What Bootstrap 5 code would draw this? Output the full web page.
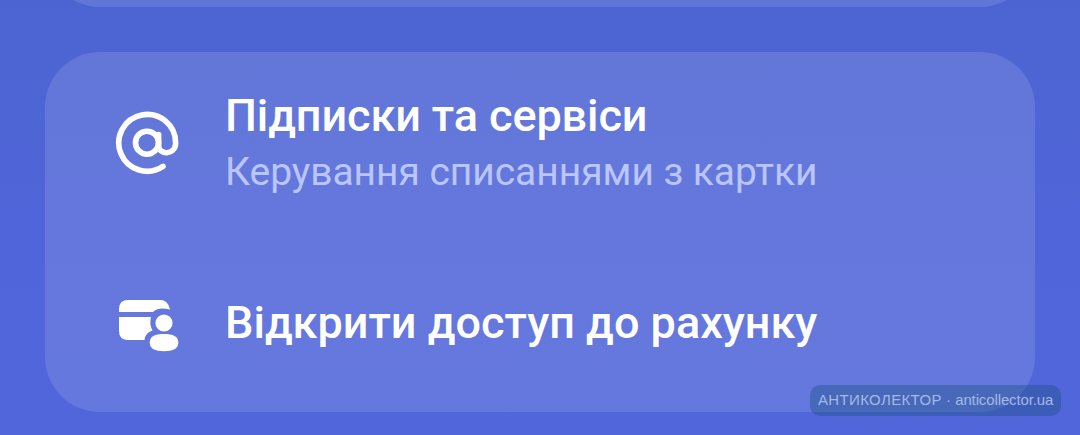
<!DOCTYPE html>
<html lang="uk">
<head>
  <meta charset="UTF-8">
  <meta name="viewport" content="width=device-width, initial-scale=1.0">
  <title>Підписки та сервіси</title>
  <link href="https://cdn.jsdelivr.net/npm/bootstrap@5.3.0/dist/css/bootstrap.min.css" rel="stylesheet">
  <style>
    body {
      height: 435px;
      background: linear-gradient(#4c64d1, #4e65d5 25%, #5065d9 50%, #5066da);
      font-family: Roboto, sans-serif;
    }

    .panel {
      margin: 0 45px;
      background: rgba(255, 255, 255, 0.12);
      border-radius: 55px;
    }

    /* Попередня панель, видно лише нижній край */
    .panel-prev {
      height: 120px;
      margin-top: -113px;
    }

    .panel-main {
      height: 360px;
      margin-top: 45px;
      padding: 37px 70px 0;
    }

    .menu-icon {
      width: 64px;
      height: 64px;
      margin-right: 46px;
    }

    .item-first {
      height: 112px;
    }

    .item-first .menu-icon {
      margin-bottom: 4px;
    }

    .item-first .item-title {
      letter-spacing: -0.1px;
    }

    .item-second {
      height: 64px;
      margin-top: 90px;
    }

    .item-title {
      font-size: 45px;
      font-weight: 500;
      line-height: 54px;
    }

    .item-note {
      font-size: 39px;
      line-height: 58px;
      letter-spacing: -0.05px;
      color: #bac6ff;
    }

    /* Водяний знак */
    .watermark {
      right: 19px;
      bottom: 19px;
      width: 251px;
      height: 31px;
      padding-left: 8px;
      border-radius: 10px;
      background: rgba(30, 80, 130, 0.4);
      color: #a3b9e5;
      font: 15px/30px "Liberation Sans", sans-serif;
    }

    .watermark-name {
      letter-spacing: 0.35px;
    }

    .watermark-site {
      letter-spacing: -0.12px;
    }
  </style>
</head>
<body class="position-relative overflow-hidden d-flex flex-column">

  <div class="panel panel-prev flex-shrink-0"></div>

  <!-- Меню -->
  <main class="panel panel-main flex-shrink-0 text-white">
    <a href="#" class="item-first d-flex align-items-center text-white text-decoration-none">
      <svg class="menu-icon flex-shrink-0" viewBox="115 111 64 64" fill="none" stroke="#fff" stroke-width="5.6" stroke-linecap="round" stroke-linejoin="round">
        <circle cx="147" cy="142.7" r="11.5"/>
        <path d="M158.600 134.500V145.500C158.600 155.500 175.600 155.500 175.600 143A28.400 28.400 0 1 0 163 166.400"/>
      </svg>
      <div class="text-nowrap">
        <div class="item-title">Підписки та сервіси</div>
        <div class="item-note">Керування списаннями з картки</div>
      </div>
    </a>
    <a href="#" class="item-second d-flex align-items-center text-white text-decoration-none">
      <svg class="menu-icon flex-shrink-0" viewBox="115 291 64 64" fill="#fff">
        <path d="M128 300H160.500Q168 300 170 309.500Q158 306.500 153 312H119V309Q119 300 128 300Z"/>
        <path d="M119 317H151Q149 324 152.500 330.500Q145 333 144.500 340H128Q119 340 119 331Z"/>
        <circle cx="164" cy="323" r="8.6"/>
        <path d="M164 334C173 334 178.300 336.300 178.300 342.500S173 351.200 164 351.200S149.700 348.700 149.700 342.500S155 334 164 334Z"/>
      </svg>
      <div class="item-title text-nowrap">Відкрити доступ до рахунку</div>
    </a>
  </main>

  <div class="watermark position-absolute text-nowrap"><span class="watermark-name">АНТИКОЛЕКТОР</span> · <span class="watermark-site">anticollector.ua</span></div>

  <script src="https://cdn.jsdelivr.net/npm/bootstrap@5.3.0/dist/js/bootstrap.bundle.min.js"></script>
</body>
</html>
